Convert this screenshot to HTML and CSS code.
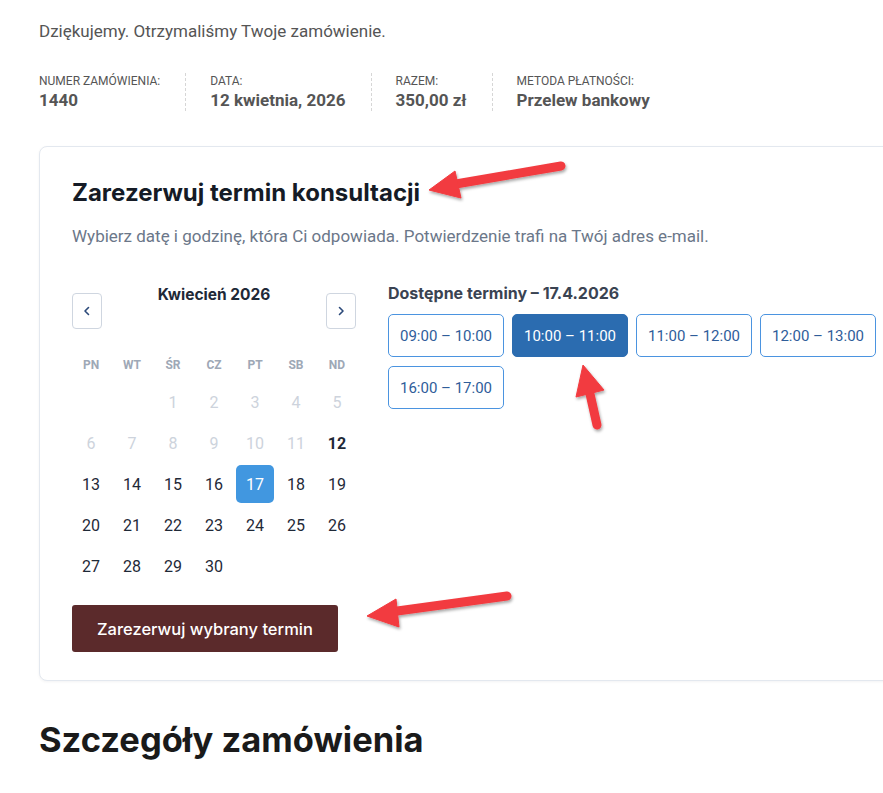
FILE: index.html
```html
<!DOCTYPE html>
<html lang="pl">
<head>
<meta charset="utf-8">
<title>Zamówienie</title>
<link rel="stylesheet" href="styles.css">
</head>
<body>
<div class="page">
  <p class="thanks">Dziękujemy. Otrzymaliśmy Twoje zamówienie.</p>

  <ul class="meta">
    <li class="meta-item"><span class="meta-label">Numer zamówienia:</span><strong class="meta-value">1440</strong></li>
    <li class="meta-item"><span class="meta-label">Data:</span><strong class="meta-value">12 kwietnia, 2026</strong></li>
    <li class="meta-item"><span class="meta-label">Razem:</span><strong class="meta-value">350,00 zł</strong></li>
    <li class="meta-item"><span class="meta-label">Metoda płatności:</span><strong class="meta-value">Przelew bankowy</strong></li>
  </ul>

  <section class="card">
    <h2 class="card-title">Zarezerwuj termin konsultacji</h2>
    <p class="card-sub">Wybierz datę i godzinę, która Ci odpowiada. Potwierdzenie trafi na Twój adres e-mail.</p>

    <div class="booking">
      <div class="calendar">
        <div class="cal-head">
          <button class="nav-btn" aria-label="Poprzedni miesiąc">
            <svg width="10" height="10" viewBox="0 0 10 10"><path d="M6.5 1.5 3 5l3.5 3.5" fill="none" stroke="#2c4a7a" stroke-width="1.6" stroke-linecap="round" stroke-linejoin="round"/></svg>
          </button>
          <div class="cal-title">Kwiecień 2026</div>
          <button class="nav-btn" aria-label="Następny miesiąc">
            <svg width="10" height="10" viewBox="0 0 10 10"><path d="M3.5 1.5 7 5 3.5 8.5" fill="none" stroke="#2c4a7a" stroke-width="1.6" stroke-linecap="round" stroke-linejoin="round"/></svg>
          </button>
        </div>
        <div class="cal-grid">
          <div class="dow">PN</div><div class="dow">WT</div><div class="dow">ŚR</div><div class="dow">CZ</div><div class="dow">PT</div><div class="dow">SB</div><div class="dow">ND</div>
          <div class="day empty"></div><div class="day empty"></div>
          <div class="day off">1</div><div class="day off">2</div><div class="day off">3</div><div class="day off">4</div><div class="day off">5</div>
          <div class="day off">6</div><div class="day off">7</div><div class="day off">8</div><div class="day off">9</div><div class="day off">10</div><div class="day off">11</div><div class="day today">12</div>
          <div class="day">13</div><div class="day">14</div><div class="day">15</div><div class="day">16</div><div class="day selected">17</div><div class="day">18</div><div class="day">19</div>
          <div class="day">20</div><div class="day">21</div><div class="day">22</div><div class="day">23</div><div class="day">24</div><div class="day">25</div><div class="day">26</div>
          <div class="day">27</div><div class="day">28</div><div class="day">29</div><div class="day">30</div>
        </div>
      </div>

      <div class="slots-col">
        <h3 class="slots-title">Dostępne terminy – 17.4.2026</h3>
        <div class="slots">
          <button class="slot">09:00 – 10:00</button>
          <button class="slot active">10:00 – 11:00</button>
          <button class="slot">11:00 – 12:00</button>
          <button class="slot">12:00 – 13:00</button>
          <button class="slot">16:00 – 17:00</button>
        </div>
      </div>
    </div>

    <button class="book-btn">Zarezerwuj wybrany termin</button>
  </section>

  <h2 class="details-title">Szczegóły zamówienia</h2>
</div>

<svg class="annotations" width="883" height="793" viewBox="0 0 883 793" aria-hidden="true">
  <defs>
    <filter id="sh" x="-20%" y="-20%" width="140%" height="140%">
      <feDropShadow dx="1" dy="2" stdDeviation="1.5" flood-color="#000" flood-opacity="0.35"/>
    </filter>
  </defs>
  <g fill="#f23b3f" stroke="#f23b3f" filter="url(#sh)">
    <line x1="561" y1="166" x2="450" y2="185" stroke-width="9" stroke-linecap="round"/>
    <polygon points="429,190 455,171 461,198" stroke-width="1" stroke-linejoin="round"/>
    <line x1="597" y1="425" x2="588" y2="385" stroke-width="9" stroke-linecap="round"/>
    <polygon points="583,365 576,397 604,390" stroke-width="1" stroke-linejoin="round"/>
    <line x1="507" y1="596" x2="390" y2="612" stroke-width="9" stroke-linecap="round"/>
    <polygon points="367,616 396,599 399,627" stroke-width="1" stroke-linejoin="round"/>
  </g>
</svg>
</body>
</html>
```

FILE: styles.css
```css
* { box-sizing: border-box; }

html, body {
  margin: 0;
  padding: 0;
  background: #ffffff;
  overflow: hidden;
}

body {
  position: relative;
  font-family: Roboto, "Liberation Sans", sans-serif;
  color: #555555;
}

.page {
  width: 1000px;
  padding: 19px 0 0 39px;
}

.thanks {
  margin: 0;
  font-size: 17px;
  line-height: 24px;
  color: #555555;
}

.meta {
  list-style: none;
  margin: 0;
  padding: 0;
  margin-top: 30px;
  display: flex;
}

.meta-item {
  display: flex;
  flex-direction: column;
  padding: 0 25px 0 24px;
  border-left: 1px dashed #d6d6d6;
}

.meta-item:first-child {
  padding-left: 0;
  border-left: 0;
}

.meta-label {
  font-size: 12px;
  line-height: 16px;
  text-transform: uppercase;
  color: #555555;
}

.meta-value {
  font-size: 17px;
  line-height: 22px;
  font-weight: 700;
  color: #555555;
}

.card {
  margin-top: 35px;
  width: 900px;
  border: 1px solid #e3e8ef;
  border-radius: 8px;
  box-shadow: 0 1px 3px rgba(15, 23, 42, 0.05);
  padding: 31px 32px 28px;
  background: #fff;
}

.card-title {
  margin: 0;
  font-family: Inter, "Noto Sans", sans-serif;
  font-size: 24px;
  line-height: 30px;
  font-weight: 700;
  color: #151b26;
}

.card-sub {
  margin: 16px 0 0;
  font-size: 17px;
  line-height: 24px;
  color: #6b7789;
}

.booking {
  margin-top: 35px;
  display: flex;
  gap: 32px;
  align-items: flex-start;
}

.calendar {
  width: 284px;
  flex: none;
}

.cal-head {
  display: flex;
  align-items: flex-start;
  justify-content: space-between;
}

.cal-title {
  margin-top: 2px;
  font-family: Inter, "Noto Sans", sans-serif;
  font-weight: 700;
  font-size: 15.5px;
  line-height: 20px;
  color: #1f2937;
}

.nav-btn {
  margin-top: 10px;
  width: 30px;
  height: 36px;
  padding: 0;
  display: flex;
  align-items: center;
  justify-content: center;
  background: #fff;
  border: 1px solid #cfd6e0;
  border-radius: 4px;
}

.cal-grid {
  margin-top: 21px;
  display: grid;
  grid-template-columns: repeat(7, 38px);
  grid-template-rows: 30px;
  grid-auto-rows: 38px;
  gap: 3px;
}

.dow {
  display: flex;
  align-items: center;
  justify-content: center;
  font-size: 12px;
  font-weight: 700;
  color: #9ea8b6;
}

.day {
  display: flex;
  align-items: center;
  justify-content: center;
  font-size: 16px;
  color: #1f2937;
  border-radius: 5px;
}

.day.off { color: #cdd3dc; }
.day.today { font-weight: 700; }
.day.selected {
  background: #4197e0;
  color: #ffffff;
}

.slots-col {
  flex: 1;
}

.slots-title {
  margin: 0;
  font-family: Inter, "Noto Sans", sans-serif;
  font-size: 16px;
  line-height: 20px;
  font-weight: 700;
  color: #3a4352;
}

.slots {
  margin-top: 11px;
  display: grid;
  grid-template-columns: repeat(4, 116px);
  gap: 9px 8px;
}

.slot {
  height: 43px;
  padding: 0;
  background: #fff;
  border: 1px solid #4b94e0;
  border-radius: 5px;
  font-family: Roboto, "Liberation Sans", sans-serif;
  font-size: 15px;
  color: #2f5d9a;
}

.slot.active {
  background: #2b6cb0;
  border-color: #2b6cb0;
  color: #ffffff;
}

.book-btn {
  margin-top: 20px;
  height: 47px;
  padding: 0 25px;
  background: #5b2a2b;
  border: 0;
  border-radius: 3px;
  font-family: Inter, "Noto Sans", sans-serif;
  font-size: 16.5px;
  font-weight: 500;
  color: #ffffff;
}

.details-title {
  margin: 38px 0 0;
  font-family: Inter, "Noto Sans", sans-serif;
  font-size: 34.5px;
  line-height: 42px;
  font-weight: 700;
  color: #1a1a1a;
}

.annotations {
  position: absolute;
  left: 0;
  top: 0;
  pointer-events: none;
}
```
